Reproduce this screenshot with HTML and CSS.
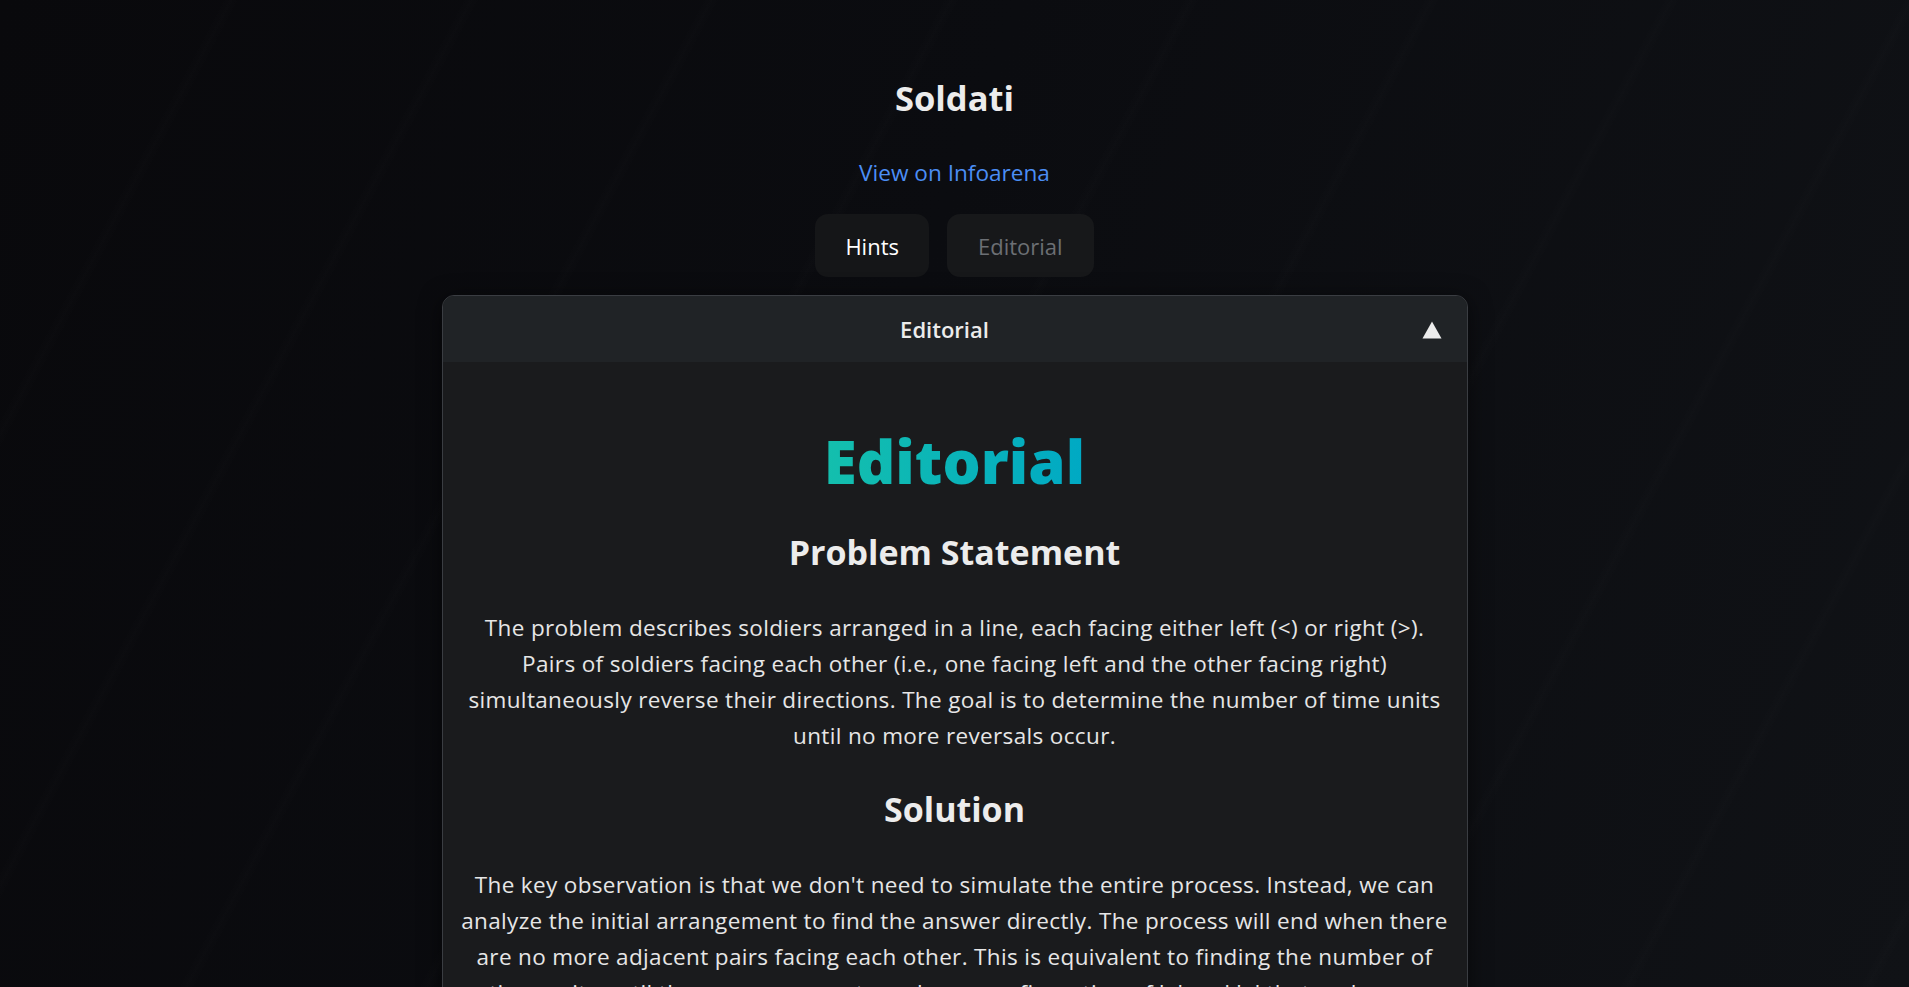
FILE: index.html
```html
<!DOCTYPE html>
<html lang="en">
<head>
<meta charset="utf-8">
<title>Soldati</title>
<link rel="stylesheet" href="styles.css">
</head>
<body>
<main class="page">
  <h1 class="title">Soldati</h1>
  <a class="source-link" href="#">View on Infoarena</a>
  <nav class="tabs">
    <button class="tab tab-hints">Hints</button>
    <button class="tab tab-editorial">Editorial</button>
  </nav>
  <section class="card">
    <header class="card-header">
      <span class="card-title">Editorial</span>
      <svg class="card-toggle" width="20" height="18" viewBox="0 0 20 18"><polygon points="10,0.5 19.5,17.5 0.5,17.5" fill="#ececec"/></svg>
    </header>
    <div class="card-body">
      <h2 class="editorial-title">Editorial</h2>
      <h3 class="section-title">Problem Statement</h3>
      <p class="text">The problem describes soldiers arranged in a line, each facing either left (&lt;) or right (&gt;). Pairs of soldiers facing each other (i.e., one facing left and the other facing right) simultaneously reverse their directions. The goal is to determine the number of time units until no more reversals occur.</p>
      <h3 class="section-title">Solution</h3>
      <p class="text">The key observation is that we don't need to simulate the entire process. Instead, we can analyze the initial arrangement to find the answer directly. The process will end when there are no more adjacent pairs facing each other. This is equivalent to finding the number of time units until the rearrangement reaches a configuration of '&lt;' and '&gt;' that no longer changes. We can track the last position of each soldier facing left and count how many steps it takes.</p>
    </div>
  </section>
</main>
</body>
</html>
```
FILE: styles.css
```css
html, body {
  margin: 0;
  padding: 0;
}

body {
  min-height: 100vh;
  font-family: "Open Sans", "Noto Sans", sans-serif;
  color: #e8e8e8;
  background-color: #0c0d11;
  background-image:
    repeating-linear-gradient(118deg, rgba(255,255,255,0) 0px, rgba(255,255,255,0) 196px, rgba(255,255,255,0.006) 204px, rgba(255,255,255,0) 212px),
    linear-gradient(110deg, #09090c 0%, #0b0c10 45%, #101216 100%);
  background-attachment: fixed;
}

.page {
  display: flex;
  flex-direction: column;
  align-items: center;
  padding-top: 76px;
}

.title {
  margin: 0;
  font-size: 34.5px;
  line-height: 44px;
  font-weight: 700;
  color: #ececec;
}

.source-link {
  margin-top: 38px;
  font-size: 22.6px;
  line-height: 30px;
  color: #4b8ef5;
  text-decoration: none;
}

.tabs {
  display: flex;
  gap: 18px;
  margin-top: 26px;
}

.tab {
  height: 63px;
  padding: 0 30px;
  border: none;
  border-radius: 13px;
  background: #151618;
  font-family: inherit;
  font-size: 22px;
  color: #ffffff;
}

.tab-editorial {
  background: #17181a;
  color: #6c6f74;
  padding: 0 31px;
}

.card {
  width: 1026px;
  box-sizing: border-box;
  margin-top: 18px;
  border: 1px solid #3a3d42;
  border-radius: 12px;
  background: #1a1b1d;
  overflow: hidden;
  box-shadow: 0 4px 22px rgba(0,0,0,0.55);
}

.card-header {
  display: flex;
  align-items: center;
  height: 66px;
  padding: 0 25px;
  background: #202326;
}

.card-title {
  flex: 1;
  text-align: center;
  font-size: 22px;
  font-weight: 600;
  color: #ececec;
}

.card-toggle {
  display: block;
  margin-top: 1px;
}

.card-body {
  padding: 61px 13px 40px;
  text-align: center;
}

.editorial-title {
  margin: 0 0 33px;
  font-size: 60px;
  line-height: 76px;
  font-weight: 800;
  background: linear-gradient(90deg, #14bfad, #00a9c4);
  -webkit-background-clip: text;
  background-clip: text;
  color: transparent;
  display: inline-block;
}

.section-title {
  margin: 0 0 38px;
  font-size: 34px;
  line-height: 40px;
  font-weight: 700;
  color: #ececec;
}

.text {
  margin: 0 0 35px;
  font-size: 22.5px;
  letter-spacing: 0.35px;
  line-height: 36px;
  color: #e6e6e6;
}
```
